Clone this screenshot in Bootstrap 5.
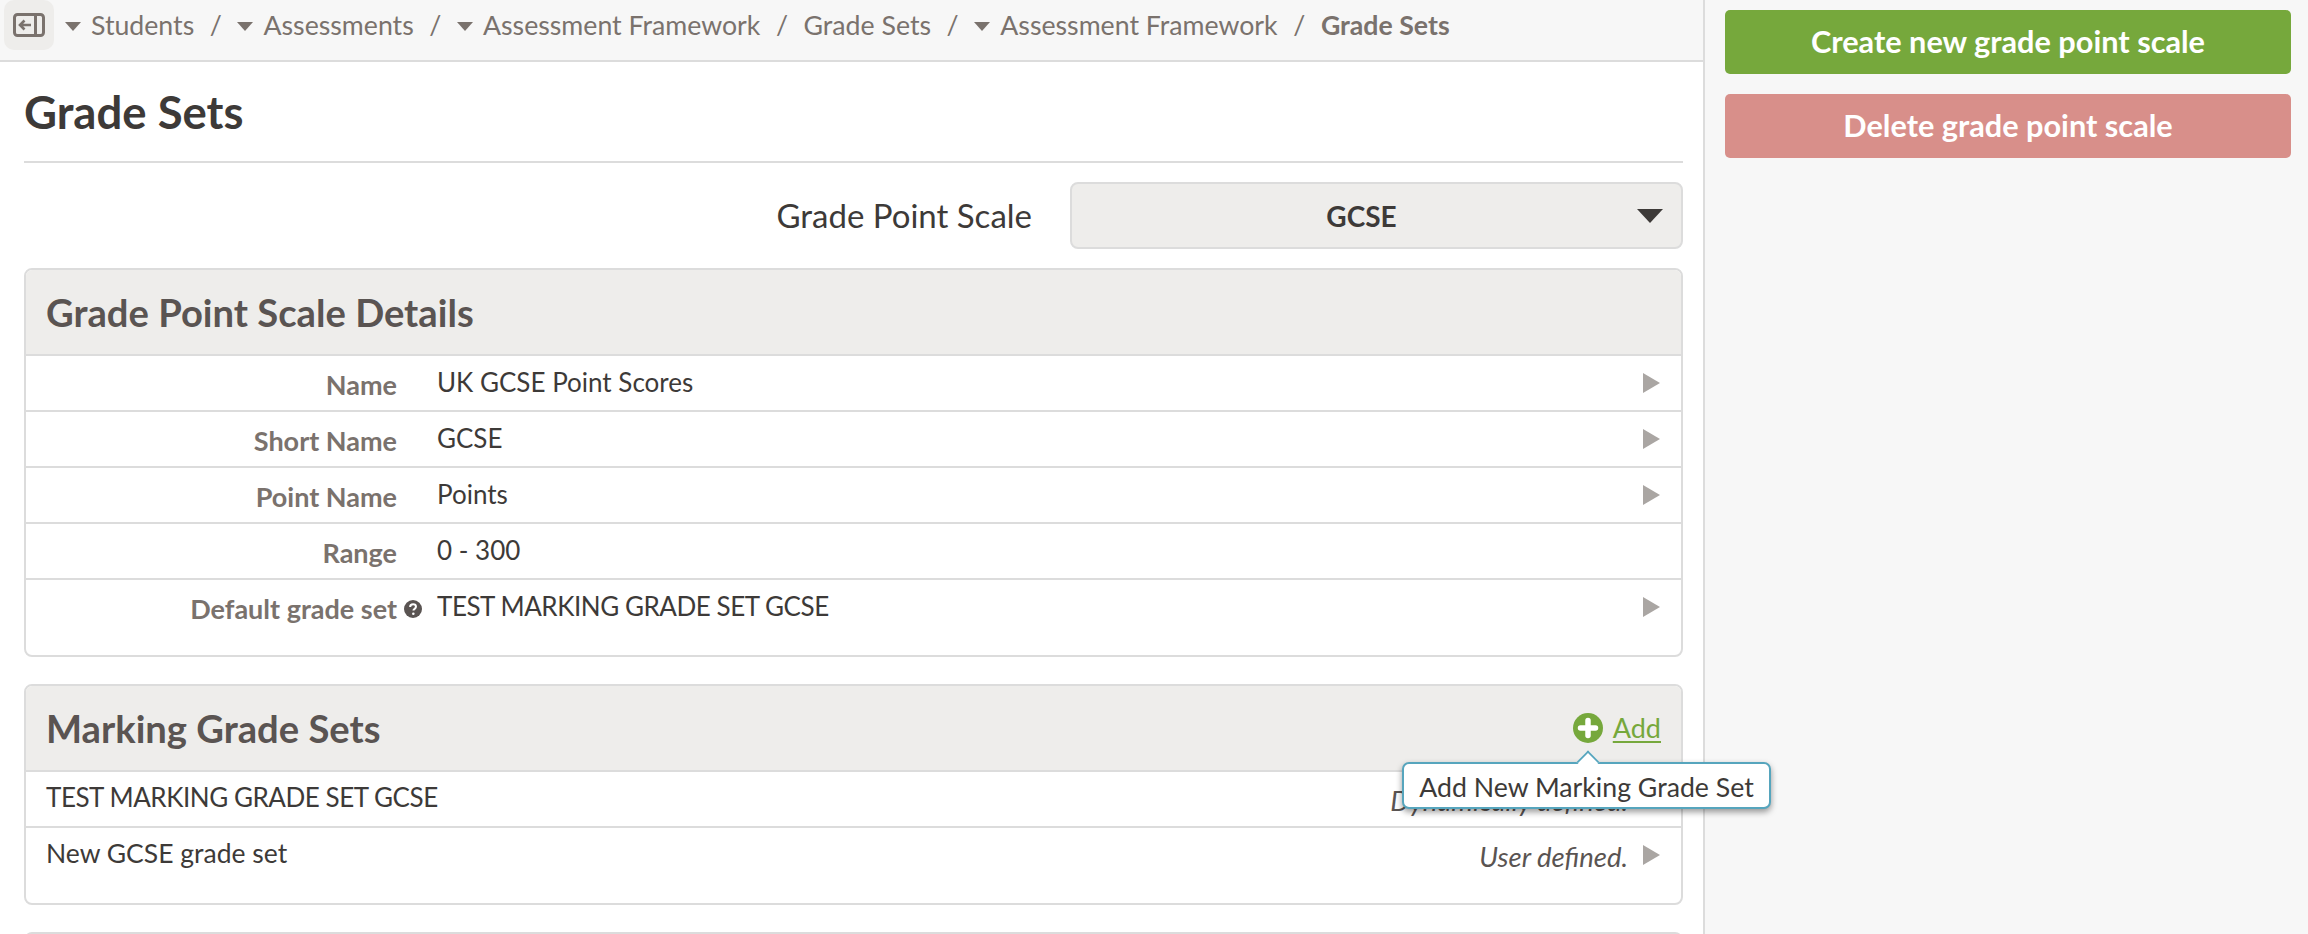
<!DOCTYPE html>
<html lang="en">
<head>
<meta charset="utf-8">
<title>Grade Sets</title>
<link href="https://cdn.jsdelivr.net/npm/bootstrap@5.3.0/dist/css/bootstrap.min.css" rel="stylesheet">
<style>
html,body{height:934px;overflow:hidden;}
body{font-family:"Lato","Noto Sans",sans-serif;font-size:26.5px;color:#3d3a38;background:#fff;}
.shell{height:934px;}
.mainpane{width:1705px;flex:none;border-right:2px solid #dcdcdc;overflow:hidden;}
.sidepane{flex:1;background:#f7f7f7;padding:10px 17px 0 20px;}
.crumbbar{height:62px;background:#f7f7f7;border-bottom:2px solid #dcdcdc;padding:0 0 10px 4px;color:#7a726d;font-size:26.7px;}
.backbtn{width:50px;height:50px;background:#eeedeb;border-radius:10px;margin-right:11px;}
.sep{margin:0 15.6px;}
.caret-d{width:0;height:0;border-left:8px solid transparent;border-right:8px solid transparent;border-top:9px solid #7a726d;margin-right:10px;margin-top:3px;}
.crumbnow{font-weight:700;}
.inner{padding:0 20px 0 24px;}
.titlebar{height:101px;border-bottom:2px solid #dcdcdc;}
.titletext{font-size:45.5px;font-weight:700;color:#3d3a38;line-height:1;margin:0;}
.scalebar{height:67px;margin:19px 0 19px;}
.scalelabel{font-size:33px;margin-right:38px;}
.scalesel{width:613px;height:67px;background:#eeedeb;border:2px solid #dcdcdc;border-radius:8px;font-size:28px;font-weight:700;position:relative;padding-right:30px;}
.scalesel::after{content:"";position:absolute;right:18px;top:25px;border-left:13px solid transparent;border-right:13px solid transparent;border-top:14px solid #3d3a38;}
.panel{border:2px solid #dcdcdc;border-radius:8px;overflow:hidden;margin-bottom:27px;background:#fff;}
.panelhead{height:86px;background:#eeedeb;padding:0 20px;border-bottom:2px solid #dcdcdc;}
.paneltitle{font-size:38.2px;font-weight:700;color:#5a5452;margin:0;line-height:1;}
.rowline{height:56px;border-bottom:2px solid #dcdcdc;padding-right:21px;}
.rowline.lastone{height:75px;border-bottom:0;}
.rowlabel{width:371px;flex:none;text-align:right;color:#7a726d;font-weight:700;font-size:27px;line-height:1;padding-top:15px;}
.rowval{margin-left:40px;flex:1;line-height:1;padding-top:13px;font-size:26px;}
.rowname{padding-left:20px;flex:1;line-height:1;padding-top:12px;}
.capstext{letter-spacing:-.45px;font-size:26px;}
.play{width:0;height:0;border-top:10px solid transparent;border-bottom:10px solid transparent;border-left:17px solid #aaa6a3;margin-top:17px;flex:none;}
.noteit{font-style:italic;color:#5a5452;font-size:27.5px;padding-top:15px;line-height:1;margin-right:15px;}
.help{width:18px;height:18px;margin:20px -25px 0 7px;flex:none;}
.addlink{color:#76a83c;text-decoration:underline;text-underline-offset:3px;font-size:27px;}
.addico{width:30px;height:30px;margin-right:10px;flex:none;}
.tipbox{position:absolute;left:1402px;top:762px;width:369px;height:47px;padding-top:3px;background:#fff;border:2px solid #56a5bd;border-radius:7px;box-shadow:0 3px 6px rgba(0,0,0,.4);font-size:26.7px;color:#3d3a38;z-index:5;white-space:nowrap;}
.tipbox::before{content:"";position:absolute;left:175px;top:-11px;width:18px;height:18px;background:#fff;border-left:2px solid #56a5bd;border-top:2px solid #56a5bd;transform:rotate(45deg) scale(.9);}
.actbtn{display:block;width:100%;height:64px;border:0;border-radius:5px;color:#fff;font-weight:700;font-size:30.7px;margin-bottom:20px;padding:0;}
.actgreen{background:#76a83c;}
.actred{background:#d88f8a;}
</style>
</head>
<body>
<div class="shell d-flex">
  <div class="mainpane">
    <nav class="crumbbar d-flex align-items-center">
      <span class="backbtn d-flex align-items-center justify-content-center">
        <svg width="32" height="24" viewBox="0 0 32 24" fill="none" stroke="#7a726d"><rect x="1.5" y="1.5" width="29" height="21" rx="3" stroke-width="3"/><path d="M22.5 1.5v21" stroke-width="3"/><path d="M18 12H7M11.5 7.5 7 12l4.5 4.5" stroke-width="2.6"/></svg>
      </span>
      <span class="caret-d"></span><span>Students</span><span class="sep">/</span>
      <span class="caret-d"></span><span>Assessments</span><span class="sep">/</span>
      <span class="caret-d"></span><span>Assessment Framework</span><span class="sep">/</span>
      <span>Grade Sets</span><span class="sep">/</span>
      <span class="caret-d"></span><span>Assessment Framework</span><span class="sep">/</span>
      <span class="crumbnow">Grade Sets</span>
    </nav>
    <div class="inner">
      <div class="titlebar d-flex align-items-center"><h1 class="titletext">Grade Sets</h1></div>
      <div class="scalebar d-flex align-items-center justify-content-end">
        <span class="scalelabel">Grade Point Scale</span>
        <div class="scalesel d-flex align-items-center justify-content-center">GCSE</div>
      </div>
      <section class="panel">
        <div class="panelhead d-flex align-items-center"><h2 class="paneltitle">Grade Point Scale Details</h2></div>
        <div class="rowline d-flex"><div class="rowlabel">Name</div><div class="rowval">UK GCSE Point Scores</div><span class="play"></span></div>
        <div class="rowline d-flex"><div class="rowlabel">Short Name</div><div class="rowval">GCSE</div><span class="play"></span></div>
        <div class="rowline d-flex"><div class="rowlabel">Point Name</div><div class="rowval">Points</div><span class="play"></span></div>
        <div class="rowline d-flex"><div class="rowlabel">Range</div><div class="rowval">0 - 300</div></div>
        <div class="rowline lastone d-flex"><div class="rowlabel">Default grade set</div>
          <svg class="help" viewBox="0 0 17 17"><circle cx="8.5" cy="8.5" r="8.5" fill="#5a5452"/><path d="M5.8 6.6c0-1.6 1.2-2.5 2.8-2.5s2.7.9 2.7 2.3c0 2-2.4 1.9-2.4 3.6" fill="none" stroke="#fff" stroke-width="1.9"/><circle cx="8.8" cy="13" r="1.2" fill="#fff"/></svg>
          <div class="rowval capstext">TEST MARKING GRADE SET GCSE</div><span class="play"></span></div>
      </section>
      <section class="panel">
        <div class="panelhead d-flex align-items-center justify-content-between">
          <h2 class="paneltitle">Marking Grade Sets</h2>
          <span class="d-flex align-items-center">
            <svg class="addico" viewBox="0 0 30 30"><circle cx="15" cy="15" r="15" fill="#76a83c"/><path d="M15 7.5v15M7.5 15h15" stroke="#fff" stroke-width="5.5" stroke-linecap="round" fill="none"/></svg>
            <a class="addlink" href="#">Add</a>
          </span>
        </div>
        <div class="rowline d-flex"><div class="rowname capstext">TEST MARKING GRADE SET GCSE</div><div class="noteit">Dynamically defined.</div><span class="play"></span></div>
        <div class="rowline lastone d-flex"><div class="rowname">New GCSE grade set</div><div class="noteit">User defined.</div><span class="play"></span></div>
      </section>
      <section class="panel">
        <div class="panelhead"></div>
      </section>
    </div>
  </div>
  <aside class="sidepane">
    <button class="actbtn actgreen" type="button">Create new grade point scale</button>
    <button class="actbtn actred" type="button">Delete grade point scale</button>
  </aside>
</div>
<div class="tipbox d-flex align-items-center justify-content-center">Add New Marking Grade Set</div>
<script src="https://cdn.jsdelivr.net/npm/bootstrap@5.3.0/dist/js/bootstrap.bundle.min.js"></script>
</body>
</html>
